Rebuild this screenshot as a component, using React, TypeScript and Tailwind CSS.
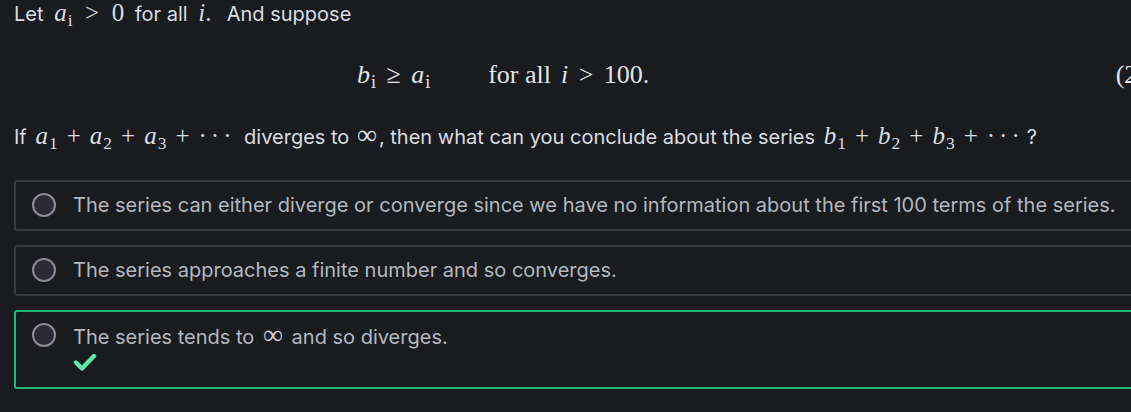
import { ReactNode } from 'react';

const serif = 'font-["Liberation_Serif","DejaVu_Serif",serif]';

function V({ children, sub }: { children: ReactNode; sub?: string }) {
  return (
    <span className={`${serif} italic`}>
      {children}
      {sub && <span className="not-italic text-[0.7em] relative top-[0.3em] ml-[1px]">{sub}</span>}
    </span>
  );
}

function Op({ children, wide }: { children: ReactNode; wide?: boolean }) {
  return <span className={`${serif} ${wide ? 'mx-[0.5em]' : 'mx-[0.36em]'}`}>{children}</span>;
}

function Dots() {
  return <span className={`${serif} tracking-[0.16em]`}>···</span>;
}

function Radio() {
  return <span className="w-6 h-6 mt-[2px] shrink-0 rounded-full border-2 border-[#8c8b95] bg-[#2b2a33]" />;
}

function Option({ children, correct }: { children: ReactNode; correct?: boolean }) {
  return (
    <div
      className={`flex items-start gap-[17px] rounded-[3px] border-2 pl-[16px] pr-4 pt-[9px] ${
        correct ? 'border-[#1fb87a] pb-[16px]' : 'border-[#3a3b3f] pb-[10px]'
      }`}
    >
      <Radio />
      <div className="text-[#b3b8c0] leading-7">
        <div>{children}</div>
        {correct && (
          <svg viewBox="0 0 24 18" className="w-[24px] h-[18px] mt-[2px]" fill="none">
            <path d="M3 9.5l6 6L21 3" stroke="#5ee8b0" strokeWidth="4.4" strokeLinecap="round" strokeLinejoin="round" />
          </svg>
        )}
      </div>
    </div>
  );
}

export default function App() {
  return (
    <div className='w-[1131px] h-[412px] overflow-hidden bg-[#1a1b1e] font-["Inter","Noto_Sans",sans-serif] text-[20px]'>
      <div className="w-[1160px] px-[14px]">
        <p className="text-[#dadde2] leading-7">
          Let{' '}
          <span className="text-[25px] leading-none mx-[5px]">
            <V sub="i">a</V>
            <Op wide>&gt;</Op>
            <span className={serif}>0</span>
          </span>{' '}
          for all{' '}
          <span className="text-[25px] leading-none ml-[5px] mr-[4px]">
            <V>i</V>
            <span className={serif}>.</span>
          </span>
          &nbsp; And suppose
        </p>

        <div className={`flex items-center h-[50px] mt-[22px] pl-[343px] text-[26px] leading-none text-[#e2e4e8] ${serif}`}>
          <V sub="i">b</V>
          <span className="mx-[0.4em]">≥</span>
          <V sub="i">a</V>
          <span className="ml-[58px]">for all</span>
          <span className="ml-[10px]">
            <V>i</V>
          </span>
          <span className="mx-[0.4em]">&gt;</span>
          <span>100.</span>
          <span className="ml-auto">(2)</span>
        </div>

        <p className="text-[#dadde2] leading-7 mt-[21px]">
          If{' '}
          <span className="text-[25px] leading-none mx-[3px]">
            <V sub="1">a</V>
            <Op>+</Op>
            <V sub="2">a</V>
            <Op>+</Op>
            <V sub="3">a</V>
            <Op>+</Op>
            <Dots />
          </span>{' '}
          diverges to <span className={`${serif} text-[28px] leading-none mx-[2px]`}>∞</span>, then what can you conclude about the series{' '}
          <span className="text-[25px] leading-none mx-[3px]">
            <V sub="1">b</V>
            <Op>+</Op>
            <V sub="2">b</V>
            <Op>+</Op>
            <V sub="3">b</V>
            <Op>+</Op>
            <Dots />
          </span>
          ?
        </p>

        <div className="flex flex-col gap-[14px] mt-[29px]">
          <Option>
            The series can either diverge or converge since we have no information about the first 100 terms of the series.
          </Option>
          <Option>The series approaches a finite number and so converges.</Option>
          <Option correct>
            The series tends to <span className={`${serif} text-[28px] leading-none mx-[3px] text-[#c9ccd1]`}>∞</span> and so diverges.
          </Option>
        </div>
      </div>
    </div>
  );
}
